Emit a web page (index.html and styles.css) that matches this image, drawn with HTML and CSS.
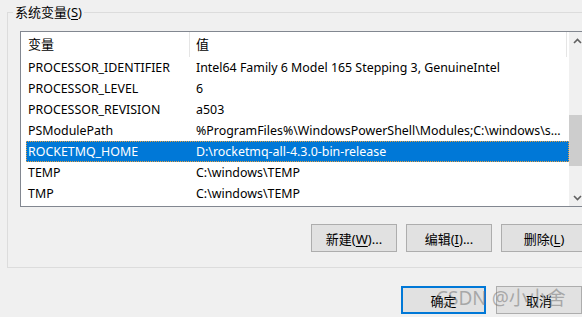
FILE: index.html
```html
<!DOCTYPE html>
<html>

<head>
    <title>环境变量</title>
    <meta charset="utf-8">
    <link rel="stylesheet" href="styles.css">
</head>

<body>

    <div class="group">
        <span class="legend">系统变量(<u>S</u>)</span>

        <div class="listbox">
            <div class="list">
                <div class="head">
                    <span class="h1">变量</span>
                    <span class="h2">值</span>
                </div>
                <div class="row"><span class="navn">PROCESSOR_IDENTIFIER</span><span class="vaerdi">Intel64 Family 6 Model 165 Stepping 3, GenuineIntel</span></div>
                <div class="row"><span class="navn">PROCESSOR_LEVEL</span><span class="vaerdi">6</span></div>
                <div class="row"><span class="navn">PROCESSOR_REVISION</span><span class="vaerdi">a503</span></div>
                <div class="row"><span class="navn">PSModulePath</span><span class="vaerdi">%ProgramFiles%\WindowsPowerShell\Modules;C:\windows\s...</span></div>
                <div class="row valgt"><span class="navn">ROCKETMQ_HOME</span><span class="vaerdi">D:\rocketmq-all-4.3.0-bin-release</span></div>
                <div class="row"><span class="navn">TEMP</span><span class="vaerdi">C:\windows\TEMP</span></div>
                <div class="row"><span class="navn">TMP</span><span class="vaerdi">C:\windows\TEMP</span></div>
            </div>

            <div class="scrollbar">
                <div class="pil">
                    <svg width="9" height="6" viewBox="0 0 9 6"><path d="M1 5 L4.5 1.5 L8 5" fill="none" stroke="#606060" stroke-width="1.6"/></svg>
                </div>
                <div class="spor">
                    <div class="thumb"></div>
                </div>
                <div class="pil">
                    <svg width="9" height="6" viewBox="0 0 9 6"><path d="M1 1 L4.5 4.5 L8 1" fill="none" stroke="#606060" stroke-width="1.6"/></svg>
                </div>
            </div>
        </div>

        <div class="knapper">
            <button class="knap">新建(<u>W</u>)...</button>
            <button class="knap">编辑(<u>I</u>)...</button>
            <button class="knap">删除(<u>L</u>)</button>
        </div>
    </div>

    <div class="bund">
        <button class="knap ok">确定</button>
        <button class="knap">取消</button>
    </div>

    <div class="watermark">CSDN @小小舍</div>

</body>

</html>
```

FILE: styles.css
```css
body {
    margin: 0;
    width: 582px;
    height: 317px;
    overflow: hidden;
    position: relative;
    background-color: #f0f0f0;
    font-family: "Noto Sans", "Noto Sans CJK SC", sans-serif;
    font-size: 12.4px;
    color: #000;
}

u {
    text-decoration: underline;
    text-underline-offset: 2px;
}

.group {
    position: relative;
    width: 620px;
    margin: 12px 0 0 7px;
    border: 1px solid #dcdcdc;
    padding: 0 0 15px 12px;
}

.legend {
    position: absolute;
    top: -10px;
    left: 5px;
    padding: 0 2px;
    background-color: #f0f0f0;
    font-size: 13px;
    line-height: 18px;
}

.listbox {
    display: flex;
    width: 565px;
    height: 174px;
    margin-top: 18px;
    border: 1px solid #828790;
    background-color: #fff;
}

.list {
    width: 548px;
}

.head {
    display: flex;
    height: 25px;
    align-items: center;
    font-size: 13px;
}

.h1 {
    width: 161px;
    height: 25px;
    line-height: 25px;
    padding-left: 7px;
    border-right: 1px solid #e5e5e5;
}

.h2 {
    width: 370px;
    height: 25px;
    line-height: 25px;
    padding-left: 6px;
    border-right: 1px solid #e5e5e5;
}

.row {
    display: flex;
    width: 543px;
    height: 21px;
    margin-left: 5px;
    box-sizing: border-box;
    line-height: 21px;
    white-space: nowrap;
}

.navn {
    width: 168px;
    padding-left: 2px;
}

.vaerdi {
    width: 372px;
    overflow: hidden;
}

.valgt {
    background-color: #0078d7;
    color: #fff;
    border: 1px dotted #e8a040;
    line-height: 19px;
}

.valgt .navn {
    padding-left: 1px;
}

.scrollbar {
    display: flex;
    flex-direction: column;
    width: 17px;
    background-color: #f0f0f0;
}

.pil {
    height: 17px;
    display: flex;
    align-items: center;
    justify-content: center;
}

.spor {
    flex: 1;
}

.thumb {
    height: 51px;
    margin-top: 66px;
    background-color: #cdcdcd;
}

.knapper {
    display: flex;
    gap: 9px;
    margin-top: 17px;
    padding-left: 291px;
}

.knap {
    width: 86px;
    height: 28px;
    padding: 0;
    border: 1px solid #adadad;
    border-radius: 0;
    background-color: #e1e1e1;
    font-family: "Noto Sans", "Noto Sans CJK SC", sans-serif;
    font-size: 13px;
    color: #000;
}

.bund {
    display: flex;
    gap: 10px;
    margin-top: 18px;
    padding-left: 401px;
}

.ok {
    width: 85px;
    border: 2px solid #0078d7;
}

.watermark {
    position: absolute;
    left: 436px;
    top: 283px;
    font-size: 19px;
    color: rgba(110, 110, 110, 0.5);
    white-space: nowrap;
}
```
